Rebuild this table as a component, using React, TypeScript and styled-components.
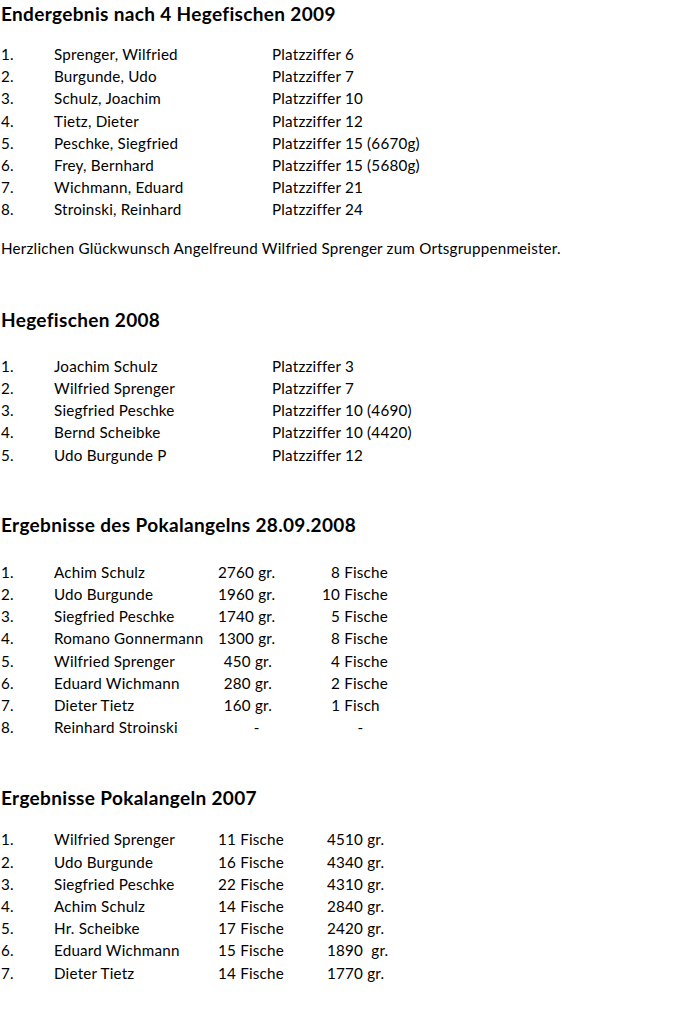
import { createGlobalStyle, styled } from "styled-components";

const GlobalStyle = createGlobalStyle`
	body {
		margin: 0;
		background: #fff;
		color: #000;
		font-family: Lato, "Open Sans", sans-serif;
	}
`;

const Page = styled.div`
	padding: 3px 0 0 1px;
	font-size: 15.2px;
	letter-spacing: 0.21px;
`;

const Heading = styled.h2<{ gap: number }>`
	margin: 0 0 ${({ gap }) => gap}px;
	font-size: 19px;
	font-weight: 700;
	letter-spacing: 0.34px;
	line-height: 22px;
`;

const Section = styled.section<{ after: number }>`
	margin-bottom: ${({ after }) => after}px;
`;

const Table = styled.div<{ cols: string }>`
	display: grid;
	grid-template-columns: ${({ cols }) => cols};
	line-height: 22.2px;
	white-space: pre;
`;

const Cell = styled.span<{ right?: boolean }>`
	text-align: ${({ right }) => (right ? "right" : "left")};
`;

const Note = styled.p`
	margin: 16px 0 0;
	line-height: 22.2px;
`;

type Row = string[];

const hege2009: Row[] = [
	["1.", "Sprenger, Wilfried", "Platzziffer 6"],
	["2.", "Burgunde, Udo", "Platzziffer 7"],
	["3.", "Schulz, Joachim", "Platzziffer 10"],
	["4.", "Tietz, Dieter", "Platzziffer 12"],
	["5.", "Peschke, Siegfried", "Platzziffer 15 (6670g)"],
	["6.", "Frey, Bernhard", "Platzziffer 15 (5680g)"],
	["7.", "Wichmann, Eduard", "Platzziffer 21"],
	["8.", "Stroinski, Reinhard", "Platzziffer 24"],
];

const hege2008: Row[] = [
	["1.", "Joachim Schulz", "Platzziffer 3"],
	["2.", "Wilfried Sprenger", "Platzziffer 7"],
	["3.", "Siegfried Peschke", "Platzziffer 10 (4690)"],
	["4.", "Bernd Scheibke", "Platzziffer 10 (4420)"],
	["5.", "Udo Burgunde P", "Platzziffer 12"],
];

const pokal2008: Row[] = [
	["1.", "Achim Schulz", "2760 gr.", "8 Fische"],
	["2.", "Udo Burgunde", "1960 gr.", "10 Fische"],
	["3.", "Siegfried Peschke", "1740 gr.", "5 Fische"],
	["4.", "Romano Gonnermann", "1300 gr.", "8 Fische"],
	["5.", "Wilfried Sprenger", "450 gr.", "4 Fische"],
	["6.", "Eduard Wichmann", "280 gr.", "2 Fische"],
	["7.", "Dieter Tietz", "160 gr.", "1 Fisch  "],
	["8.", "Reinhard Stroinski", "-   ", "-      "],
];

const pokal2007: Row[] = [
	["1.", "Wilfried Sprenger", "11 Fische", "4510 gr."],
	["2.", "Udo Burgunde", "16 Fische", "4340 gr."],
	["3.", "Siegfried Peschke", "22 Fische", "4310 gr."],
	["4.", "Achim Schulz", "14 Fische", "2840 gr."],
	["5.", "Hr. Scheibke", "17 Fische", "2420 gr."],
	["6.", "Eduard Wichmann", "15 Fische", "1890  gr."],
	["7.", "Dieter Tietz", "14 Fische", "1770 gr."],
];

export default function App() {
	return (
		<>
			<GlobalStyle />
			<Page>
				<Section after={50}>
					<Heading gap={18}>Endergebnis nach 4 Hegefischen 2009</Heading>
					<Table cols="53px 218px auto">
						{hege2009.map((r) => r.map((c, i) => <Cell key={r[0] + i}>{c}</Cell>))}
					</Table>
					<Note>Herzlichen Glückwunsch Angelfreund Wilfried Sprenger zum Ortsgruppenmeister.</Note>
				</Section>

				<Section after={48}>
					<Heading gap={24}>Hegefischen 2008</Heading>
					<Table cols="53px 218px auto">
						{hege2008.map((r) => r.map((c, i) => <Cell key={r[0] + i}>{c}</Cell>))}
					</Table>
				</Section>

				<Section after={49}>
					<Heading gap={25}>Ergebnisse des Pokalangelns 28.09.2008</Heading>
					<Table cols="53px 164px 54px 116px">
						{pokal2008.map((r) =>
							r.map((c, i) => (
								<Cell key={r[0] + i} right={i >= 2}>
									{c}
								</Cell>
							))
						)}
					</Table>
				</Section>

				<Section after={40}>
					<Heading gap={19}>Ergebnisse Pokalangeln 2007</Heading>
					<Table cols="53px 164px 109px auto">
						{pokal2007.map((r) => r.map((c, i) => <Cell key={r[0] + i}>{c}</Cell>))}
					</Table>
				</Section>
			</Page>
		</>
	);
}
